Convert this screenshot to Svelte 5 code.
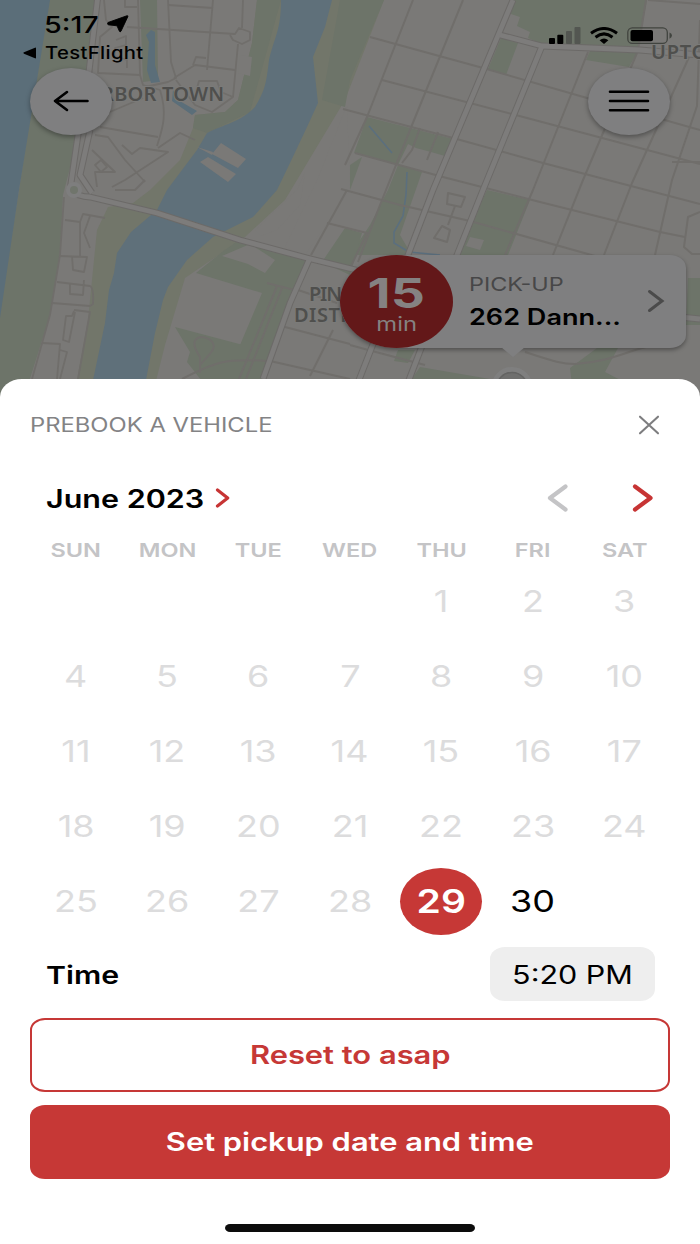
<script lang="ts">
  // Props
  export let month: string = 'June 2023';
  export let firstWeekday: number = 4;
  export let daysInMonth: number = 30;
  export let today: number = 29;
  export let time: string = '5:20 PM';

  // Local state
  let selected = today;

  const weekdays = ['SUN', 'MON', 'TUE', 'WED', 'THU', 'FRI', 'SAT'];

  // Map geometry
  const streets = [
    'M413 0L367 117L345 165', 'M463 0L410 130L380 205L358 262',
    'M588 52L533 190L505 255', 'M637 53L583 180L553 255', 'M690 55L632 183L604 255',
    'M370 37L483 68L587 98L700 130', 'M382 80L527 118L700 164', 'M343 109L453 138L543 163L700 204',
    'M355 153L443 177L540 202L660 232L685 237', 'M341 189L400 205L470 221L595 256',
    'M327 223L367 233L350 268', 'M648 0L700 4', 'M646 0L638 50', 'M700 20L697 106L672 180L655 255',
    'M672 162L700 162', 'M700 212L688 217L684 247L692 254L700 254', 'M350 345L372 351L425 365',
    'M525 352C550 360 560 364 575 364C610 362 630 350 650 346',
    'M448 193L465 197L461 207L447 204Z', 'M455 206L448 225', 'M442 226L450 230L447 242L434 238Z',
    'M347 190L311 255', 'M285 327L350 344', 'M333 330L310 376', 'M270 361L350 379',
    'M298 290L337 303', 'M182 379C215 362 225 358 267 361', 'M200 373L200 357C187 337 200 335 209 339C220 347 210 353 200 365',
    'M277 286L239 379', 'M282 288L246 379', 'M420 128L412 150L402 163', 'M438 132L427 160', 'M267 283L298 291'
  ];
  const lanes = [
    'M104 0L106 20L112 27L100 37L98 73L140 75L138 0', 'M168 0L171 62L176 78L168 82L145 87',
    'M125 0L125 7L137 7', 'M213 0L207 70', 'M168 5L213 8', 'M243 0L242 28', 'M127 27L235 34L239 28L250 32L250 40L242 44L233 40L230 35',
    'M238 44L233 97L212 112L195 105L176 80', 'M174 78L195 65L235 70', 'M193 65L196 57L206 58', 'M196 92L199 81L217 81L221 92L233 97',
    'M116 40L126 36L126 45L115 48L115 56L127 60L127 68', 'M140 75L143 85L160 90C168 115 162 130 157 146', 'M105 114L143 98',
    'M100 127L158 137', 'M95 135L108 137L125 160L145 182', 'M158 148L180 133L195 140', 'M92 150L115 172L95 172L97 187',
    'M122 145L132 154L140 148L168 152L125 180L112 187', 'M95 165L101 160L107 167L101 172Z', 'M115 190L135 190L145 180',
    'M64 197L60 255L50 315L32 379', 'M65 220L80 222L83 214L105 218', 'M80 222L80 257', 'M90 216L84 233L90 248',
    'M59 256L87 257L84 272L73 270L72 256', 'M57 282L90 286Q94 288 93 304L90 306L52 303', 'M70 284L70 294L83 295L84 280',
    'M74 310L90 312L78 379', 'M74 311L72 316L66 316L63 340L69 342L75 312', 'M42 343L60 344L57 379', 'M60 350L67 352L60 379'
  ];
  const avenues = [
    'M98 -5L88 80L78 135L70 190', 'M90 130L80 175L92 193', 'M70 190Q78 197 90 197L157 213L240 240L307 258L360 271', 'M309 260L290 303L263 379',
    'M513 0L433 190L408 255L357 385', 'M542 46L483 190L457 255L407 385', 'M500 35L542 46L640 50L700 55', 'M680 317L700 319'
  ];

  // Computed values
  $: cells = [
    ...Array(firstWeekday).fill(null),
    ...Array.from({ length: daysInMonth }, (_, i) => i + 1)
  ];

  // Methods
  function selectDay(day: number) {
    if (day < today) return;
    selected = day;
  }
</script>

<div class="screen">
  <svg class="map" viewBox="0 0 700 420" width="700" height="420" aria-hidden="true">
    <rect width="700" height="420" fill="#7a7977" />
    <path fill="#6d7469" d="M48 0H97L88 80L72 160L63 195L60 255L50 315L28 385V420H0V310L19 190Z" />
    <path fill="#72766a" d="M257 0L252 43L238 100L225 112L195 115L193 128L180 160L150 190L133 203L108 207L97 230L92 280L88 320L76 385H155L165 345L185 278L245 237L285 200L345 100L384 0Z" />
    <path fill="#6d7469" d="M257 0L252 43L238 100L225 112L195 115L193 128L207 133L250 112L281 0Z" />
    <path fill="#6d7469" d="M140 0H157L158 80L143 82Z M340 0H384L350 80L345 107L322 100Z" />
    <path fill="#6d7469" d="M196 273L222 252L242 238L307 259L297 290L262 385H232L240 345L262 293Z M175 327L243 345L232 385H205L187 362L190 352Z" />
    <path fill="#7a7977" d="M222 256L250 244L275 260L265 273L248 264Z M347 105L318 178L285 247L305 255L350 190Z M255 230L297 190L305 172L300 205L277 230L261 236Z" />
    <path fill="#6d7469" d="M513 0H647L638 48L542 44L528 38L530 32L517 26L520 17L508 13Z M501 38L518 43L506 75L488 69Z M590 51L637 53L629 67L586 60Z" />
    <path fill="#6d7469" d="M367 117L453 139L445 156L431 152L416 148L408 144L398 165L354 153Z M350 165L362 157L350 190Z M398 165L422 172L400 235L410 252L404 255H350L370 225L388 190Z" />
    <path fill="#6d7469" d="M345 228L362 233L350 275L322 262Z M487 190L530 200L508 255H457L470 225Z M398 350L415 350L408 363L394 361Z M597 348H618L605 372L630 385H572L570 368Z M688 278H700V325H686Z M420 367L490 379H412Z" />
    <path fill="#7a7977" d="M470 237L484 240L480 250L466 246Z M240 55L252 57L250 76L238 73Z" />
    <path fill="#5b6e79" d="M0 0H50L19 190L0 318Z" />
    <path fill="#5f707a" d="M281 0C281 30 275 35 269 60C266 85 265 90 255 107C240 122 230 122 207 133L197 150L167 190L157 210L131 232L117 253L114 273L109 290L105 323L92 385H145L155 333L163 300L168 287L187 260L213 237L253 217L277 190L290 163L307 127L318 103L313 57L325 27L332 0Z" />
    <path fill="#5b6e79" d="M146 35L151 30L155 32L155 65L160 82L151 83L147 70L149 42Z M173 90L178 100L197 111L192 115L172 101Z" />
    <path fill="#7a7977" d="M212 154L221 143L246 159L238 168Z M200 162L208 157L236 174L228 182Z M197 147L213 152L212 155Z" />
    <path fill="none" stroke="#5b6f7e" stroke-width="1.6" d="M369 126L392 153 M407 172L406 195L403 216L394 232L394 243L409 252L440 255" />
    {#each lanes as d}
      <path class="lane" {d} />
    {/each}
    {#each streets as d}
      <path class="street" {d} />
    {/each}
    {#each avenues as d}
      <path class="avenue-edge" {d} />
    {/each}
    {#each avenues as d}
      <path class="avenue" {d} />
    {/each}
    <circle cx="74" cy="190" r="6" fill="#70756c" stroke="#7e7e7e" stroke-width="4" />
    <g class="places">
      <text x="72" y="101" textLength="153">HARBOR TOWN</text>
      <text x="309" y="301" textLength="34">PIN</text>
      <text x="294" y="322" textLength="60">DISTR</text>
      <text x="651" y="59">UPTO</text>
    </g>
    <circle cx="512" cy="388" r="18.500" fill="#6f6f6e" stroke="#7f7f7f" stroke-width="5" />
    <circle cx="512" cy="388" r="15.500" fill="none" stroke="#646463" stroke-width="1.500" />
  </svg>

  <header class="status">
    <div class="status-left">
      <div class="clock">
        <span class="wide">5:17</span>
        <svg width="22" height="18" viewBox="0 0 22 18"><path d="M1 7.500L19.800.8Q21.300.4 20.800 1.700L14 16.200Q13 17.500 12.400 16.200L10 10.800L1.200 9.800Q-.2 8.600 1 7.500Z" stroke="#000" stroke-width=".9" /></svg>
      </div>
      <div class="back-app">
        <svg width="14" height="12" viewBox="0 0 14 12"><path d="M13 1.200V10.800Q13 11.700 12 11.300L1 6.700Q-.2 6 1 5.300L12 .7Q13 .3 13 1.200Z" /></svg>
        <span class="wide">TestFlight</span>
      </div>
    </div>
    <div class="status-right">
      <svg width="32" height="18" viewBox="0 0 32 18">
        <rect x="0" y="11" width="6" height="6" rx="1" />
        <rect x="8.300" y="7.700" width="6" height="9.300" rx="1" />
        <rect x="17" y="4" width="6" height="13" rx="1" fill="#535651" />
        <rect x="25.500" y="0" width="6" height="17" rx="1" fill="#535651" />
      </svg>
      <svg width="28" height="18" viewBox="0 0 28 18" fill="none" stroke="#000" stroke-width="3">
        <path d="M1 6.200Q14-3.200 27 6.200" />
        <path d="M5.500 10.200Q14 3.600 22.500 10.200" />
        <path d="M9.600 13.200Q14 9.700 18.400 13.200L14 17Z" fill="#000" stroke="none" />
      </svg>
      <svg width="46" height="18" viewBox="0 0 46 18">
        <rect x=".8" y=".8" width="39.500" height="15.600" rx="4.500" fill="none" stroke="#41443f" stroke-width="1.300" />
        <rect x="3.500" y="3" width="22.500" height="11.200" rx="2" />
        <path d="M42.500 5.500Q45 6.500 45 8.600T42.500 11.700Z" fill="#41443f" />
      </svg>
    </div>
  </header>

  <nav class="controls">
    <button type="button" class="round" aria-label="Back">
      <svg width="36" height="22" viewBox="0 0 36 22"><path d="M34.500 11H2M14 2L2 11L14 20" /></svg>
    </button>
    <button type="button" class="round" aria-label="Menu">
      <svg width="42" height="24" viewBox="0 0 42 24"><path d="M2 2.700H40M2 12H40M2 21.300H40" /></svg>
    </button>
  </nav>

  <div class="pickup">
    <div class="eta">
      <span class="wide eta-value">15</span>
      <span class="wide eta-unit">min</span>
    </div>
    <div class="address">
      <span class="wide address-label">PICK-UP</span>
      <span class="wide address-value">262 Dann...</span>
    </div>
    <svg class="address-arrow" width="18" height="24" viewBox="0 0 18 24"><path d="M2.500 2.500L15 12L2.500 21.500" /></svg>
  </div>

  <section class="sheet">
    <div class="sheet-header">
      <span class="wide">PREBOOK A VEHICLE</span>
      <button type="button" class="plain" aria-label="Close">
        <svg width="22" height="20" viewBox="0 0 22 20"><path d="M2 1.700L20 18.300M20 1.700L2 18.300" stroke="#7d7d7f" stroke-width="2.100" /></svg>
      </button>
    </div>

    <div class="month-row">
      <button type="button" class="plain month">
        <span class="wide">{month}</span>
        <svg width="16" height="20" viewBox="0 0 16 20"><path d="M2.500 2L12.700 10L2.500 18" stroke="#c73434" stroke-width="3.200" /></svg>
      </button>
      <button type="button" class="plain previous" aria-label="Previous month">
        <svg width="22" height="30" viewBox="0 0 22 30"><path d="M18.500 3.500L3 15L18.500 26.500" stroke="#c4c4c6" stroke-width="4.200" /></svg>
      </button>
      <button type="button" class="plain next" aria-label="Next month">
        <svg width="22" height="30" viewBox="0 0 22 30"><path d="M3 3.500L18.500 15L3 26.500" stroke="#c73434" stroke-width="4.200" /></svg>
      </button>
    </div>

    <div class="weekdays">
      {#each weekdays as weekday}
        <span class="wide">{weekday}</span>
      {/each}
    </div>

    <div class="days">
      {#each cells as day}
        {#if day === null}
          <span></span>
        {:else}
          <button
            type="button"
            class="day"
            class:past={day < today}
            class:selected={day === selected}
            on:click={() => selectDay(day)}
          >
            <span class="wide">{day}</span>
          </button>
        {/if}
      {/each}
    </div>

    <div class="time-row">
      <span class="wide time-label">Time</span>
      <button type="button" class="time-value"><span class="wide">{time}</span></button>
    </div>

    <div class="actions">
      <button type="button" class="action outline"><span class="wide">Reset to asap</span></button>
      <button type="button" class="action filled"><span class="wide">Set pickup date and time</span></button>
    </div>

    <div class="home-bar"></div>
  </section>
</div>

<style>
  :global(body) {
    margin: 0;
    background: #fff;
  }

  .screen {
    position: relative;
    width: 700px;
    height: 1244px;
    overflow: hidden;
    font-family: Inter, "Liberation Sans", sans-serif;
    color: #000;
  }

  button {
    font-family: inherit;
    margin: 0;
    padding: 0;
    border: none;
    background: none;
    color: inherit;
    cursor: pointer;
  }

  svg {
    display: block;
  }

  /* Extended letterforms */
  .wide {
    display: inline-block;
    white-space: nowrap;
    transform: scaleX(1.22);
  }

  /* Map */
  .map {
    position: absolute;
    top: 0;
    left: 0;
  }

  .lane,
  .street,
  .avenue,
  .avenue-edge {
    fill: none;
    stroke-linejoin: round;
  }

  .lane {
    stroke: #706e6b;
    stroke-width: 1.8;
  }

  .street {
    stroke: #706e6b;
    stroke-width: 2;
  }

  .avenue-edge {
    stroke: #6c6a68;
    stroke-width: 6.8;
  }

  .avenue {
    stroke: #7d7c7b;
    stroke-width: 4.8;
  }

  .places text {
    font-family: "Noto Sans", sans-serif;
    font-size: 20px;
    font-weight: 600;
    letter-spacing: 0.8px;
    fill: #4f4f4d;
    stroke: #7b7b79;
    stroke-width: 2px;
    paint-order: stroke;
  }

  /* Status bar */
  .status {
    position: relative;
    display: flex;
    justify-content: space-between;
    height: 68px;
    box-sizing: border-box;
    padding: 9px 27px 0 23px;
  }

  .status .wide {
    transform-origin: left;
  }

  .clock {
    display: flex;
    align-items: center;
    height: 30px;
    padding-left: 21px;
    font-size: 23.5px;
    font-weight: 500;
  }

  .clock .wide {
    transform: scaleX(1.22);
  }

  .clock svg {
    margin-left: 18px;
  }

  .back-app {
    display: flex;
    align-items: center;
    gap: 8px;
    height: 27px;
    font-size: 17px;
    font-weight: 500;
    letter-spacing: 0.3px;
  }

  .back-app .wide {
    transform: scaleX(1.19);
  }

  .status-right {
    display: flex;
    gap: 9px;
    padding-top: 18px;
  }

  /* Map controls */
  .controls {
    position: relative;
    display: flex;
    justify-content: space-between;
    padding: 0 30px;
  }

  .round {
    display: flex;
    align-items: center;
    justify-content: center;
    width: 82px;
    height: 67px;
    border-radius: 50%;
    background: #7f7f80;
    box-shadow: 0 2px 5px rgba(0, 0, 0, 0.35);
  }

  .round svg {
    margin-top: -1px;
  }

  .round path {
    fill: none;
    stroke: #000;
    stroke-width: 2.6;
    stroke-linecap: round;
    stroke-linejoin: round;
  }

  /* Pickup callout */
  .pickup {
    position: absolute;
    top: 255px;
    left: 340px;
    display: flex;
    align-items: center;
    width: 346px;
    height: 93px;
    border-radius: 57px 16px 16px 57px / 46px 13px 13px 46px;
    background: #7f7f80;
    box-shadow: 0 2px 4px rgba(0, 0, 0, 0.35);
  }

  .pickup::after {
    content: "";
    position: absolute;
    top: 92px;
    left: 161px;
    border: 12px solid transparent;
    border-top: 10px solid #7f7f80;
    border-bottom: none;
  }

  .eta {
    display: flex;
    flex-direction: column;
    align-items: center;
    width: 113px;
    height: 93px;
    border-radius: 50%;
    background: #631819;
    color: #858282;
  }

  .eta-value {
    margin-top: 16px;
    font-size: 41.5px;
    line-height: 44px;
    font-weight: 700;
    transform: scaleX(1.29);
  }

  .eta-unit {
    font-size: 19.5px;
    line-height: 19px;
  }

  .address {
    display: flex;
    flex-direction: column;
    flex: 1;
    align-items: flex-start;
    padding-left: 16px;
  }

  .address .wide {
    transform-origin: left;
  }

  .address-label {
    margin-top: -2px;
    color: #474748;
    font-size: 19.2px;
    line-height: 32px;
  }

  .address-value {
    font-size: 22.2px;
    line-height: 34px;
    font-weight: 600;
  }

  .address-arrow {
    margin: -1px 21px 0 0;
  }

  .address-arrow path {
    fill: none;
    stroke: #4b4b4b;
    stroke-width: 3;
    stroke-linecap: round;
  }

  /* Booking sheet */
  .sheet {
    position: absolute;
    top: 379px;
    left: 0;
    width: 700px;
    height: 865px;
    box-sizing: border-box;
    padding: 0 30px;
    border-radius: 22px 22px 0 0 / 18px 18px 0 0;
    background: #fff;
  }

  .plain path {
    fill: none;
    stroke-linecap: round;
    stroke-linejoin: round;
  }

  .sheet-header {
    display: flex;
    align-items: center;
    justify-content: space-between;
    height: 91px;
    padding-right: 10px;
    color: #838385;
    font-size: 19.5px;
  }

  .sheet-header .wide {
    transform-origin: left;
  }

  .month-row {
    display: flex;
    align-items: center;
    height: 58px;
    margin-top: -1px;
    padding: 0 16px;
  }

  .month {
    display: flex;
    align-items: center;
    font-size: 25px;
    font-weight: 600;
  }

  .month .wide {
    padding-top: 2px;
    transform-origin: left;
  }

  .month svg {
    margin-left: 39px;
  }

  .previous {
    margin-left: auto;
    margin-right: 63px;
  }

  .weekdays,
  .days {
    display: grid;
    grid-template-columns: repeat(7, 1fr);
    justify-items: center;
    align-items: center;
  }

  .weekdays {
    height: 44px;
    margin-top: 1px;
    color: #c4c4c6;
    font-size: 19.3px;
    font-weight: 600;
  }

  .days {
    grid-auto-rows: 75px;
    margin-top: -8px;
  }

  .day {
    width: 82px;
    height: 67px;
    padding-bottom: 1px;
    border-radius: 50%;
    font-size: 29.5px;
  }

  .past {
    color: #dcdcdd;
    cursor: default;
  }

  .selected {
    background: #c63836;
    color: #fff;
    font-size: 32px;
    font-weight: 600;
  }

  .time-row {
    display: flex;
    align-items: center;
    justify-content: space-between;
    height: 54px;
    margin-top: 8px;
    padding: 0 15px 0 16px;
  }

  .time-label {
    transform-origin: left;
    padding-top: 1px;
    font-size: 24.8px;
    font-weight: 600;
  }

  .time-value {
    width: 165px;
    height: 54px;
    padding-top: 1px;
    border-radius: 15px / 12px;
    background: #eee;
    font-size: 25px;
  }

  .actions {
    display: flex;
    flex-direction: column;
    gap: 13px;
    margin-top: 17px;
  }

  .action {
    height: 74px;
    padding-bottom: 2px;
    border-radius: 15px / 12px;
    font-size: 25.3px;
    font-weight: 600;
  }

  .outline {
    border: 2px solid #c63836;
    color: #c63836;
  }

  .filled {
    background: #c63836;
    color: #fff;
  }

  .home-bar {
    width: 250px;
    height: 8px;
    margin: 45px auto 0;
    border-radius: 5px / 4px;
    background: #0c0c0c;
  }
</style>
